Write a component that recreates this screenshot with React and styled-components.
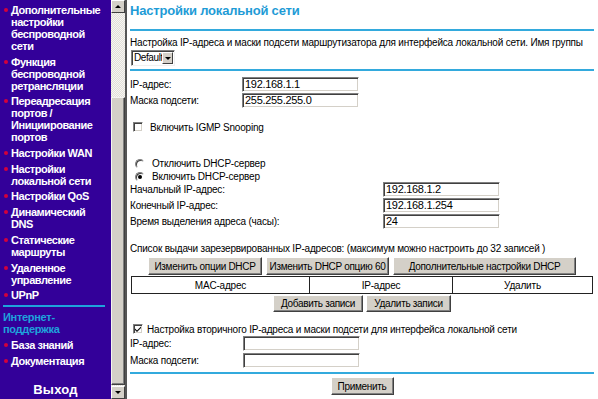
import styled, { createGlobalStyle } from "styled-components";

const GlobalStyle = createGlobalStyle`
  html, body {
    margin: 0;
    padding: 0;
    overflow: hidden;
    background: #fff;
  }
`;

const Page = styled.div`
  display: flex;
  width: 598px;
  height: 399px;
  overflow: hidden;
  font-family: "Liberation Sans", Arial, sans-serif;
`;

/* ---------- left menu frame ---------- */

const Sidebar = styled.nav`
  width: 111px;
  flex: none;
  background: #330099;
  display: flex;
  flex-direction: column;
  padding-top: 4px;
  box-sizing: border-box;
`;

const MenuItem = styled.div`
  position: relative;
  padding-left: 11px;
  margin-bottom: 3.7px;
  color: #fff;
  font-size: 11px;
  font-weight: bold;
  line-height: 12px;
  letter-spacing: -0.45px;
  white-space: pre-line;

  &::before {
    content: "";
    position: absolute;
    left: 4px;
    top: 4px;
    width: 4px;
    height: 4px;
    border-radius: 50%;
    background: #d4003c;
  }
`;

const MenuRule = styled.div`
  height: 2px;
  margin: 0 6px 4px 3px;
  background: #1ea3dc;
`;

const SupportTitle = styled.div`
  padding-left: 3px;
  margin-bottom: 4px;
  color: #1ea3dc;
  font-size: 11px;
  font-weight: bold;
  line-height: 12px;
  letter-spacing: -0.3px;
  white-space: pre-line;
`;

const Logout = styled.div`
  margin-top: auto;
  margin-bottom: 1px;
  text-align: center;
  color: #fff;
  font-size: 13px;
  font-weight: bold;
  line-height: 16px;
  letter-spacing: 0.2px;
`;

const ScrollBar = styled.div`
  width: 14px;
  flex: none;
  display: flex;
  flex-direction: column;
  background: #ece9e2;
  background-image: repeating-conic-gradient(#f6f5f2 0 25%, #e2dfd8 0 50%);
  background-size: 2px 2px;
`;

const ScrollButton = styled.div`
  height: 13px;
  flex: none;
  box-sizing: border-box;
  background: #d4d0c8;
  border-style: solid;
  border-width: 1px;
  border-color: #fff #404040 #404040 #fff;
  display: flex;
  align-items: center;
  justify-content: center;

  &::after {
    content: "";
    border-left: 3px solid transparent;
    border-right: 3px solid transparent;
    ${(p) => (p.$down ? "border-top: 3px solid #000;" : "border-bottom: 3px solid #000;")}
  }
`;

const ScrollTrack = styled.div`
  flex: 1;
  display: flex;
  flex-direction: column;
  justify-content: flex-end;
`;

const ScrollThumb = styled.div`
  height: 288px;
  box-sizing: border-box;
  background: #d4d0c8;
  border-style: solid;
  border-width: 1px;
  border-color: #f4f3f0 #404040 #404040 #f4f3f0;
  box-shadow: inset -1px -1px 0 #808080;
  margin-bottom: 1px;
`;

/* ---------- main frame ---------- */

const Main = styled.main`
  flex: 1;
  box-sizing: border-box;
  border-left: 2px solid #555;
  padding: 0 4px 0 3px;
  font-size: 10px;
  color: #000;
  letter-spacing: -0.2px;
`;

const Title = styled.h1`
  margin: 0;
  height: 29px;
  line-height: 22px;
  font-size: 13px;
  font-weight: bold;
  color: #1e9bd6;
  letter-spacing: -0.2px;
`;

const Rule = styled.div`
  height: 2px;
  background: #33aadd;
  margin-top: ${(p) => p.$top || 0}px;
`;

const Text = styled.div`
  line-height: 14px;
  margin-top: ${(p) => p.$top || 0}px;
  white-space: nowrap;
`;

const Select = styled.div`
  display: flex;
  width: 44px;
  height: 16px;
  box-sizing: border-box;
  margin-left: 1px;
  border-style: solid;
  border-width: 1px;
  border-color: #808080 #f0f0f0 #f0f0f0 #808080;
  box-shadow: inset 1px 1px 0 #404040;
  font-size: 10px;
  line-height: 14px;
  letter-spacing: -0.4px;
  margin-bottom: 3px;
`;

const SelectValue = styled.span`
  flex: 1;
  padding-left: 2px;
  overflow: hidden;
`;

const SelectArrow = styled.span`
  width: 11px;
  margin: 1px 1px 1px 0;
  box-sizing: border-box;
  background: #d4d0c8;
  border-style: solid;
  border-width: 1px;
  border-color: #fff #404040 #404040 #fff;
  display: flex;
  align-items: center;
  justify-content: center;

  &::after {
    content: "";
    border-left: 3px solid transparent;
    border-right: 3px solid transparent;
    border-top: 3px solid #000;
  }
`;

const Fields = styled.div`
  display: grid;
  grid-template-columns: ${(p) => p.$label}px 117px;
  row-gap: ${(p) => p.$gap ?? 1}px;
  align-items: center;
  margin-top: ${(p) => p.$top || 0}px;
`;

const Label = styled.span`
  white-space: nowrap;
`;

const Input = styled.div`
  height: 15px;
  box-sizing: border-box;
  border-style: solid;
  border-width: 1px;
  border-color: #808080 #fff #fff #808080;
  box-shadow: inset 1px 1px 0 #404040, inset -1px -1px 0 #d4d0c8;
  padding-left: 2px;
  font-size: 11px;
  line-height: 13px;
  letter-spacing: -0.3px;
  background: #fff;
`;

const Check = styled.label`
  display: flex;
  align-items: center;
  gap: ${(p) => p.$gap || 7}px;
  height: ${(p) => p.$h || 14}px;
  padding-left: ${(p) => p.$indent || 3}px;
  margin-top: ${(p) => p.$top || 0}px;
  white-space: nowrap;
`;

const Box = styled.span`
  width: 10px;
  height: 10px;
  flex: none;
  box-sizing: border-box;
  border-style: solid;
  border-width: 1px;
  border-color: #808080 #fff #fff #808080;
  box-shadow: inset 1px 1px 0 #404040, inset -1px -1px 0 #d4d0c8;
  background: #fff;
  display: flex;
  align-items: center;
  justify-content: center;
`;

const Radio = styled.span`
  width: 10px;
  height: 10px;
  flex: none;
  box-sizing: border-box;
  border-radius: 50%;
  border-style: solid;
  border-width: 1px;
  border-color: #808080 #fff #fff #808080;
  box-shadow: inset 1px 1px 0 #404040;
  background: #fff;
  display: flex;
  align-items: center;
  justify-content: center;

  &::after {
    content: "";
    display: ${(p) => (p.$on ? "block" : "none")};
    width: 4px;
    height: 4px;
    border-radius: 50%;
    background: #000;
  }
`;

const ButtonRow = styled.div`
  display: flex;
  justify-content: center;
  gap: ${(p) => p.$gap || 4}px;
  margin-top: ${(p) => p.$top || 0}px;
`;

const Button = styled.button`
  width: ${(p) => p.$w}px;
  height: ${(p) => p.$h || 17}px;
  box-sizing: border-box;
  padding: 0;
  background: #d4d0c8;
  border-style: solid;
  border-width: 1px;
  border-color: #fff #404040 #404040 #fff;
  box-shadow: inset -1px -1px 0 #808080;
  font-family: "Liberation Sans", Arial, sans-serif;
  font-size: 10px;
  letter-spacing: -0.3px;
  color: #000;
  line-height: 13px;
  white-space: nowrap;
`;

const Table = styled.table`
  width: 462px;
  margin: 1px 0 1px 1px;
  border-collapse: collapse;
  border: 1px solid #222;
  font-size: 10px;

  td {
    border: 1px solid #222;
    height: 16px;
    padding: 0;
    text-align: center;
  }
`;

const CheckMark = () => (
  <svg width="8" height="8" viewBox="0 0 8 8">
    <path d="M1 3.5 L3 5.5 L7 1.5 L7 3 L3 7 L1 5 Z" fill="#000" />
  </svg>
);

const menu = [
  "Дополнительные\nнастройки\nбеспроводной\nсети",
  "Функция\nбеспроводной\nретрансляции",
  "Переадресация\nпортов /\nИнициирование\nпортов",
  "Настройки WAN",
  "Настройки\nлокальной сети",
  "Настройки QoS",
  "Динамический\nDNS",
  "Статические\nмаршруты",
  "Удаленное\nуправление",
  "UPnP",
];

export default function App() {
  return (
    <>
      <GlobalStyle />
      <Page>
        <Sidebar>
          {menu.map((item) => (
            <MenuItem key={item}>{item}</MenuItem>
          ))}
          <MenuRule />
          <SupportTitle>{"Интернет-\nподдержка"}</SupportTitle>
          <MenuItem>База знаний</MenuItem>
          <MenuItem>Документация</MenuItem>
          <Logout>Выход</Logout>
        </Sidebar>

        <ScrollBar>
          <ScrollButton />
          <ScrollTrack>
            <ScrollThumb />
          </ScrollTrack>
          <ScrollButton $down />
        </ScrollBar>

        <Main>
          <Title>Настройки локальной сети</Title>
          <Rule />
          <Text $top={5}>
            Настройка IP-адреса и маски подсети маршрутизатора для интерфейса локальной сети. Имя группы
          </Text>
          <Select>
            <SelectValue>Default</SelectValue>
            <SelectArrow />
          </Select>
          <Rule />

          <Fields $label={112} $top={6}>
            <Label>IP-адрес:</Label>
            <Input>192.168.1.1</Input>
            <Label>Маска подсети:</Label>
            <Input>255.255.255.0</Input>
          </Fields>

          <Check $top={12}>
            <Box />
            Включить IGMP Snooping
          </Check>

          <Check $top={23} $h={13} $indent={5}>
            <Radio />
            Отключить DHCP-сервер
          </Check>
          <Check $h={13} $indent={5}>
            <Radio $on />
            Включить DHCP-сервер
          </Check>

          <Fields $label={253} $top={-1}>
            <Label>Начальный IP-адрес:</Label>
            <Input>192.168.1.2</Input>
            <Label>Конечный IP-адрес:</Label>
            <Input>192.168.1.254</Input>
            <Label>Время выделения адреса (часы):</Label>
            <Input>24</Input>
          </Fields>

          <Text $top={13}>
            Список выдачи зарезервированных IP-адресов: (максимум можно настроить до 32 записей )
          </Text>
          <ButtonRow $top={1}>
            <Button $w={114} $h={18}>Изменить опции DHCP</Button>
            <Button $w={123} $h={18}>Изменить DHCP опцию 60</Button>
            <Button $w={183} $h={18}>Дополнительные настройки DHCP</Button>
          </ButtonRow>
          <Table>
            <tbody>
              <tr>
                <td style={{ width: 177 }}>MAC-адрес</td>
                <td style={{ width: 142 }}>IP-адрес</td>
                <td>Удалить</td>
              </tr>
            </tbody>
          </Table>
          <ButtonRow $gap={3}>
            <Button $w={90}>Добавить записи</Button>
            <Button $w={85}>Удалить записи</Button>
          </ButtonRow>

          <Check $top={10} $gap={4}>
            <Box>
              <CheckMark />
            </Box>
            Настройка вторичного IP-адреса и маски подсети для интерфейса локальной сети
          </Check>
          <Fields $label={113} $top={0} $gap={2}>
            <Label>IP-адрес:</Label>
            <Input />
            <Label>Маска подсети:</Label>
            <Input />
          </Fields>
          <Rule $top={4} />
          <ButtonRow $top={3}>
            <Button $w={63} $h={18}>
              Применить
            </Button>
          </ButtonRow>
        </Main>
      </Page>
    </>
  );
}
